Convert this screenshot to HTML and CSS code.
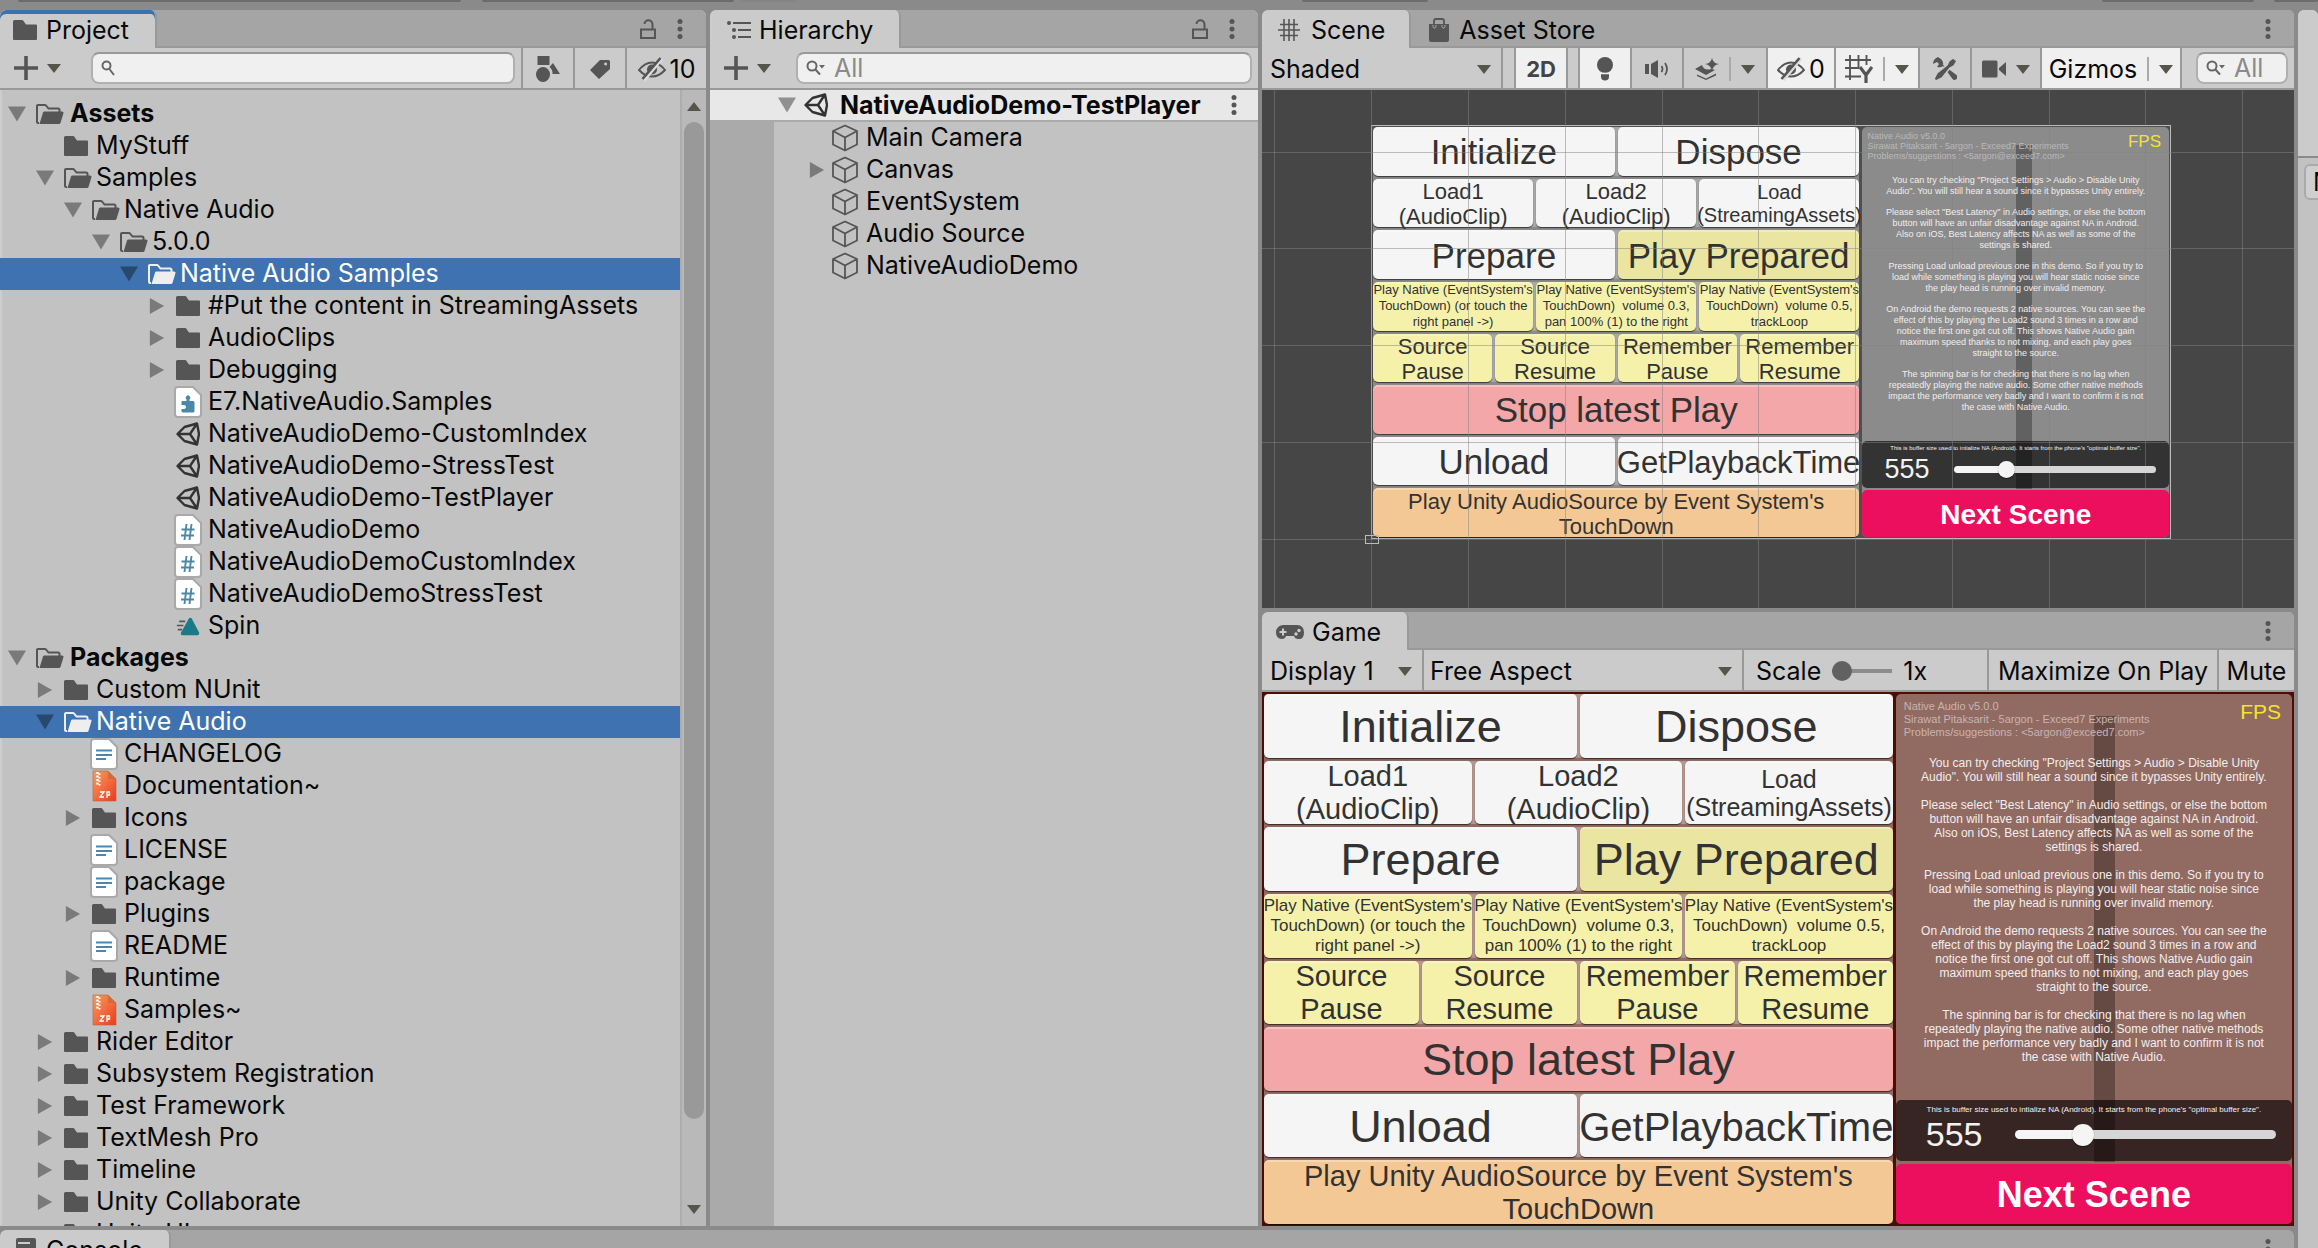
FILE: index.html
```html
<!DOCTYPE html>
<html lang="en">
<head>
<meta charset="utf-8">
<title>Unity Editor - NativeAudioDemo-TestPlayer</title>
<link rel="stylesheet" href="styles.css">
</head>
<body>
<svg class="defs" aria-hidden="true">
  <symbol id="down" viewBox="0 0 18 15"><path d="M0 0h18L9 15z"/></symbol>
  <symbol id="right" viewBox="0 0 16 18"><path d="M0 0l16 9-16 9z"/></symbol>
  <symbol id="tri" viewBox="0 0 14 9"><path d="M0 0h14L7 9z"/></symbol>
  <symbol id="folder" viewBox="0 0 24 20"><path d="M0 1.5Q0 0 1.500 0H9q1 0 1.500 1L13 4.500h10q1 0 1 1V19q0 1-1 1H1q-1 0-1-1z"/></symbol>
  <symbol id="open" viewBox="0 0 28 20"><path d="M3 19H2q-1 0-1-1V2q0-1 1-1h7q1 0 1.500 1L12.500 4.500H22q1.500 0 1.500 1.500v2.500" fill="none" stroke="currentColor" stroke-width="2"/><path d="M8.500 7.500H26q2 0 1.500 1.500l-3 10q-.3 1-1.500 1H3.500L7 8.500q.3-1 1.500-1z"/></symbol>
  <symbol id="unity" viewBox="0 0 24 24"><path d="M1.500 12L8.500 5 21 1.500l2 10.500-2 10.500L8.500 19zM1.500 12H14M14 12l7-10.500M14 12l7 10.500" fill="none" stroke="currentColor" stroke-width="2.400" stroke-linejoin="round"/></symbol>
  <symbol id="cube" viewBox="0 0 28 28"><path d="M14 1.500L26 7v13.500L14 26.500 2 20.500V7zM2 7l12 6.500L26 7M14 13.500v13" fill="none" stroke="currentColor" stroke-width="1.800" stroke-linejoin="round"/></symbol>
  <symbol id="doc" viewBox="0 0 28 32"><path d="M4 1h15l8 8v19q0 3-3 3H4q-3 0-3-3V4q0-3 3-3z" fill="#fff" stroke="#a9a9a9" stroke-width="2"/></symbol>
  <symbol id="script" viewBox="0 0 28 32"><use href="#doc"/><path d="M12.500 10l-2 16M17.500 10l-2 16M7.500 15.500h13M7 21.500h13" stroke="#4a87a8" stroke-width="1.900" fill="none"/></symbol>
  <symbol id="text" viewBox="0 0 28 32"><use href="#doc"/><path d="M6 12.500h16M6 17h16M6 21h10" stroke="#4a87a8" stroke-width="2.200" fill="none"/></symbol>
  <symbol id="asm" viewBox="0 0 28 32"><use href="#doc"/><path d="M8 15h4.500v-1.500a2.300 2.300 0 1 1 3 0V15H19q1.500 0 1.500 1.500V25q0 1.500-1.500 1.500H9q-1.500 0-1.500-1.500v-2h2.500a2 2 0 0 0 0-4H7.500v-3z" fill="#4a87a8"/></symbol>
  <symbol id="zip" viewBox="0 0 28 32"><defs><linearGradient id="zg" x1="0" y1="0" x2="1" y2="1"><stop offset="0" stop-color="#f6a060"/><stop offset="1" stop-color="#ee3a1e"/></linearGradient></defs><path d="M3 1h15l8 8v22H3z" fill="url(#zg)" stroke="#c06038" stroke-width=".6"/><path d="M18 1v8h8z" fill="#d8693f"/><path d="M7.500 2v14" stroke="#fff" stroke-width="2.500" stroke-dasharray="2 1.500"/><path d="M9.500 3.500v12" stroke="#fff" stroke-width="2" stroke-dasharray="1.500 2"/><path d="M10 22h4l-4 5h4M17 28v-6h2.500v3H17" fill="none" stroke="#fff" stroke-width="1.300"/></symbol>
  <symbol id="anim" viewBox="0 0 26 20"><path d="M3.500 5H10M1 9.500h7M2 14h4.500" stroke="#555" stroke-width="1.800"/><path d="M14 2q1.500-2 3 0l8 15q.5 3-2 3H7q-2.500-.5-1.500-3z" fill="#1a7a86"/></symbol>
  <symbol id="lock" viewBox="0 0 18 20"><path d="M2 10.500h14v8.500H2zM13.500 10V5.500A4 4 0 0 0 5.500 5" fill="none" stroke="currentColor" stroke-width="2"/></symbol>
  <symbol id="kebab" viewBox="0 0 6 20"><circle cx="3" cy="2.500" r="2.500"/><circle cx="3" cy="10" r="2.500"/><circle cx="3" cy="17.500" r="2.500"/></symbol>
  <symbol id="plus" viewBox="0 0 24 24"><path d="M10.200 0h3.600v10.200H24v3.600H13.800V24h-3.600V13.800H0v-3.600h10.200z"/></symbol>
  <symbol id="mag" viewBox="0 0 20 16"><path d="M8 8.500L13 15" stroke="currentColor" stroke-width="2"/><circle cx="5.500" cy="5.500" r="4" fill="none" stroke="currentColor" stroke-width="2"/></symbol>
  <symbol id="magd" viewBox="0 0 20 16"><path d="M9 9l5 5.500" stroke="currentColor" stroke-width="2"/><circle cx="6" cy="6" r="4.500" fill="none" stroke="currentColor" stroke-width="2"/><path d="M13 5h6l-3 3.500z"/></symbol>
  <symbol id="shapes" viewBox="0 0 24 26"><path d="M1.500 0h12v9h-12zM17 7l7 11h-7.500a8 8 0 0 0-3-7z"/><ellipse cx="7" cy="18.500" rx="7" ry="7.500"/></symbol>
  <symbol id="tag" viewBox="0 0 20 20"><path d="M10 1h8.500q1.500 0 1.500 1.500V10L9 20 0 11zM15.500 3.500a1.500 1.500 0 1 0 .1 3 1.500 1.500 0 0 0-.1-3z" fill-rule="evenodd"/></symbol>
  <symbol id="eye" viewBox="0 0 28 24"><path d="M1 13Q7 5.500 14 5.500T27 13q-6 6.500-13 6.500T1 13z" fill="none" stroke="currentColor" stroke-width="2"/><circle cx="14" cy="12.500" r="5"/><path d="M6.500 23.500L24 2" stroke="#ddd" stroke-width="2.600"/><path d="M4.500 22L22.500 1" stroke="currentColor" stroke-width="2.600"/></symbol>
  <symbol id="list" viewBox="0 0 24 18"><path d="M6 2h18M11 9h13M11 16h13" stroke="currentColor" stroke-width="2"/><circle cx="2" cy="2" r="2"/><circle cx="7" cy="9" r="2"/><circle cx="7" cy="16" r="2"/></symbol>
  <symbol id="hash" viewBox="0 0 22 22"><path d="M6 0v22M11 0v22M16 0v22M2 5.500h18M0 11h22M2 16.500h18" stroke="currentColor" stroke-width="1.600" fill="none"/></symbol>
  <symbol id="bag" viewBox="0 0 20 24"><path d="M0 6h20v16q0 2-2 2H2q-2 0-2-2z"/><path d="M5 9V3q0-2 2-2h6q2 0 2 2v6" fill="none" stroke="currentColor" stroke-width="1.800"/><path d="M4 7v1.500a1.500 1.500 0 0 0 3 0V7M13 7v1.500a1.500 1.500 0 0 0 3 0V7" stroke="#aaa" fill="none"/></symbol>
  <symbol id="bulb" viewBox="0 0 16 24"><circle cx="8" cy="8" r="8"/><path d="M4 17h8v2.500q0 4-4 4t-4-4z"/><path d="M3 16.500h10" stroke="#f0f0f0" stroke-width="1.500"/></symbol>
  <symbol id="audio" viewBox="0 0 24 18"><path d="M0 4h4v10H0zM6 4l7-4v18l-7-4z"/><path d="M16.500 6q2 3 0 6M20 3q4 6 0 12" fill="none" stroke="currentColor" stroke-width="1.800"/></symbol>
  <symbol id="fx" viewBox="0 0 24 22"><path d="M0 11l7-4q2 6 9 4l4 1-9 5zM2 16.500l9 4 10-5v2L11 22 2 18z"/><path d="M17 0q1 5.500 7 6-6 1-7 7-1-6-7-7 6-.5 7-6z"/></symbol>
  <symbol id="gridy" viewBox="0 0 28 28"><path d="M5 0v25M13.500 0v14M21.500 0v10M0 5h26M0 13h14M0 21.500h16" stroke="currentColor" stroke-width="1.900" fill="none"/><path d="M15 12l6 8 6-8M21 19v9" fill="none" stroke="currentColor" stroke-width="3.200"/></symbol>
  <symbol id="tools" viewBox="0 0 24 24"><path d="M5 0Q0 2 0 7l4-2 2 2-2 3q4 1 6-1l9.500 13q2 2 4 0t0-4L10 8q1-5-5-8z"/><path d="M20 1l4 3-3 5-4 2-8 10-6 3-2-2 3-6 10-8 2-4z" stroke="#cbcbcb" stroke-width="1.500"/></symbol>
  <symbol id="cam" viewBox="0 0 24 18"><path d="M0 2q0-1.500 1.500-1.500H14q1.500 0 1.500 1.500v14q0 1.500-1.500 1.500H1.500Q0 17.500 0 16zM17 8l7-6v14l-7-6z"/></symbol>
  <symbol id="pad" viewBox="0 0 28 16"><path d="M7 1h14q7 0 7 7.500T22 15q-3 0-4-3h-8q-1 3-4 3-6 0-6-6.500T7 1z"/><path d="M3.500 8h7M7 4.500v7" stroke="#cbcbcb" stroke-width="2"/><circle cx="20" cy="10" r="1.700" fill="#cbcbcb"/><circle cx="23" cy="6.500" r="1.700" fill="#cbcbcb"/></symbol>
  <symbol id="console" viewBox="0 0 20 24"><path d="M2 0h16q2 0 2 2v22H0V2q0-2 2-2z"/><path d="M2 5h12M2 11h16M2 17h16" stroke="#cbcbcb" stroke-width="2"/></symbol>
</svg>

<div class="editor">
  <header class="mainbar"><i></i><i></i><i class="faint"></i><i></i><i></i><i></i></header>

  <section class="panel project">
    <div class="tabs">
      <button class="tab focused"><svg width="24" height="20"><use href="#folder"/></svg>Project</button>
      <div class="tab-tools"><button aria-label="Lock"><svg width="18" height="20"><use href="#lock"/></svg></button><button aria-label="Menu"><svg width="6" height="20"><use href="#kebab"/></svg></button></div>
    </div>
    <div class="toolbar">
      <button class="add" aria-label="Create"><svg width="24" height="24"><use href="#plus"/></svg><svg width="14" height="9"><use href="#tri"/></svg></button>
      <label class="search"><svg width="20" height="16"><use href="#mag"/></svg><input type="text" aria-label="Search project"></label>
      <button class="cell w52" aria-label="Search by type"><svg width="24" height="26"><use href="#shapes"/></svg></button>
      <button class="cell w52" aria-label="Search by label"><svg width="20" height="20"><use href="#tag"/></svg></button>
      <button class="cell w81"><svg width="28" height="24"><use href="#eye"/></svg>10</button>
    </div>
    <div class="tree-area">
      <ul class="tree">
        <li class="l0 root"><svg class="arrow"><use href="#down"/></svg><svg class="icon"><use href="#open"/></svg>Assets</li>
        <li class="l1"><span class="arrow"></span><svg class="icon fold"><use href="#folder"/></svg>MyStuff</li>
        <li class="l1"><svg class="arrow"><use href="#down"/></svg><svg class="icon"><use href="#open"/></svg>Samples</li>
        <li class="l2"><svg class="arrow"><use href="#down"/></svg><svg class="icon"><use href="#open"/></svg>Native Audio</li>
        <li class="l3"><svg class="arrow"><use href="#down"/></svg><svg class="icon"><use href="#open"/></svg>5.0.0</li>
        <li class="l4 selected"><svg class="arrow"><use href="#down"/></svg><svg class="icon"><use href="#open"/></svg>Native Audio Samples</li>
        <li class="l5"><svg class="arrow"><use href="#right"/></svg><svg class="icon fold"><use href="#folder"/></svg>#Put the content in StreamingAssets</li>
        <li class="l5"><svg class="arrow"><use href="#right"/></svg><svg class="icon fold"><use href="#folder"/></svg>AudioClips</li>
        <li class="l5"><svg class="arrow"><use href="#right"/></svg><svg class="icon fold"><use href="#folder"/></svg>Debugging</li>
        <li class="l5"><span class="arrow"></span><svg class="icon file"><use href="#asm"/></svg>E7.NativeAudio.Samples</li>
        <li class="l5"><span class="arrow"></span><svg class="icon logo"><use href="#unity"/></svg>NativeAudioDemo-CustomIndex</li>
        <li class="l5"><span class="arrow"></span><svg class="icon logo"><use href="#unity"/></svg>NativeAudioDemo-StressTest</li>
        <li class="l5"><span class="arrow"></span><svg class="icon logo"><use href="#unity"/></svg>NativeAudioDemo-TestPlayer</li>
        <li class="l5"><span class="arrow"></span><svg class="icon file"><use href="#script"/></svg>NativeAudioDemo</li>
        <li class="l5"><span class="arrow"></span><svg class="icon file"><use href="#script"/></svg>NativeAudioDemoCustomIndex</li>
        <li class="l5"><span class="arrow"></span><svg class="icon file"><use href="#script"/></svg>NativeAudioDemoStressTest</li>
        <li class="l5"><span class="arrow"></span><svg class="icon fold"><use href="#anim"/></svg>Spin</li>
        <li class="l0 root"><svg class="arrow"><use href="#down"/></svg><svg class="icon"><use href="#open"/></svg>Packages</li>
        <li class="l1"><svg class="arrow"><use href="#right"/></svg><svg class="icon fold"><use href="#folder"/></svg>Custom NUnit</li>
        <li class="l1 selected"><svg class="arrow"><use href="#down"/></svg><svg class="icon"><use href="#open"/></svg>Native Audio</li>
        <li class="l2"><span class="arrow"></span><svg class="icon file"><use href="#text"/></svg>CHANGELOG</li>
        <li class="l2"><span class="arrow"></span><svg class="icon file"><use href="#zip"/></svg>Documentation~</li>
        <li class="l2"><svg class="arrow"><use href="#right"/></svg><svg class="icon fold"><use href="#folder"/></svg>Icons</li>
        <li class="l2"><span class="arrow"></span><svg class="icon file"><use href="#text"/></svg>LICENSE</li>
        <li class="l2"><span class="arrow"></span><svg class="icon file"><use href="#text"/></svg>package</li>
        <li class="l2"><svg class="arrow"><use href="#right"/></svg><svg class="icon fold"><use href="#folder"/></svg>Plugins</li>
        <li class="l2"><span class="arrow"></span><svg class="icon file"><use href="#text"/></svg>README</li>
        <li class="l2"><svg class="arrow"><use href="#right"/></svg><svg class="icon fold"><use href="#folder"/></svg>Runtime</li>
        <li class="l2"><span class="arrow"></span><svg class="icon file"><use href="#zip"/></svg>Samples~</li>
        <li class="l1"><svg class="arrow"><use href="#right"/></svg><svg class="icon fold"><use href="#folder"/></svg>Rider Editor</li>
        <li class="l1"><svg class="arrow"><use href="#right"/></svg><svg class="icon fold"><use href="#folder"/></svg>Subsystem Registration</li>
        <li class="l1"><svg class="arrow"><use href="#right"/></svg><svg class="icon fold"><use href="#folder"/></svg>Test Framework</li>
        <li class="l1"><svg class="arrow"><use href="#right"/></svg><svg class="icon fold"><use href="#folder"/></svg>TextMesh Pro</li>
        <li class="l1"><svg class="arrow"><use href="#right"/></svg><svg class="icon fold"><use href="#folder"/></svg>Timeline</li>
        <li class="l1"><svg class="arrow"><use href="#right"/></svg><svg class="icon fold"><use href="#folder"/></svg>Unity Collaborate</li>
        <li class="l1"><svg class="arrow"><use href="#right"/></svg><svg class="icon fold"><use href="#folder"/></svg>Unity UI</li>
      </ul>
      <div class="scrollbar"><svg class="up" width="14" height="9"><use href="#tri"/></svg><div class="thumb"></div><svg width="14" height="9"><use href="#tri"/></svg></div>
    </div>
  </section>

  <section class="panel hierarchy">
    <div class="tabs">
      <button class="tab"><svg width="24" height="18"><use href="#list"/></svg>Hierarchy</button>
      <div class="tab-tools"><button aria-label="Lock"><svg width="18" height="20"><use href="#lock"/></svg></button><button aria-label="Menu"><svg width="6" height="20"><use href="#kebab"/></svg></button></div>
    </div>
    <div class="toolbar">
      <button class="add" aria-label="Create"><svg width="24" height="24"><use href="#plus"/></svg><svg width="14" height="9"><use href="#tri"/></svg></button>
      <label class="search"><svg width="20" height="16"><use href="#magd"/></svg><input type="text" placeholder="All" aria-label="Search hierarchy"></label>
    </div>
    <div class="scene-row"><svg class="arrow"><use href="#down"/></svg><svg class="icon logo"><use href="#unity"/></svg><span>NativeAudioDemo-TestPlayer</span><button aria-label="Scene menu"><svg width="6" height="20"><use href="#kebab"/></svg></button></div>
    <div class="objects">
      <ul class="tree">
        <li><span class="arrow"></span><svg class="icon cube"><use href="#cube"/></svg>Main Camera</li>
        <li><svg class="arrow"><use href="#right"/></svg><svg class="icon cube"><use href="#cube"/></svg>Canvas</li>
        <li><span class="arrow"></span><svg class="icon cube"><use href="#cube"/></svg>EventSystem</li>
        <li><span class="arrow"></span><svg class="icon cube"><use href="#cube"/></svg>Audio Source</li>
        <li><span class="arrow"></span><svg class="icon cube"><use href="#cube"/></svg>NativeAudioDemo</li>
      </ul>
    </div>
  </section>

  <div class="views">
    <section class="panel scene">
      <div class="tabs">
        <button class="tab"><svg width="22" height="22"><use href="#hash"/></svg>Scene</button>
        <button class="tab idle"><svg width="20" height="24"><use href="#bag"/></svg>Asset Store</button>
        <div class="tab-tools"><button aria-label="Menu"><svg width="6" height="20"><use href="#kebab"/></svg></button></div>
      </div>
      <div class="toolbar">
        <div class="drop shaded"><select aria-label="Draw mode"><option>Shaded</option></select><svg width="14" height="9"><use href="#tri"/></svg></div>
        <button class="cell on bold w52">2D</button>
        <span class="spacer"></span>
        <button class="cell on w52" aria-label="Lighting"><svg width="16" height="24"><use href="#bulb"/></svg></button>
        <button class="cell w52" aria-label="Audio"><svg width="24" height="18"><use href="#audio"/></svg></button>
        <button class="cell w84" aria-label="Effects"><svg width="24" height="22"><use href="#fx"/></svg><i class="bar"></i><svg width="14" height="9"><use href="#tri"/></svg></button>
        <button class="cell on w68"><svg width="28" height="24"><use href="#eye"/></svg>0</button>
        <button class="cell on w84" aria-label="Grid"><svg width="28" height="28"><use href="#gridy"/></svg><i class="bar"></i><svg width="14" height="9"><use href="#tri"/></svg></button>
        <button class="cell w52" aria-label="Tools"><svg width="24" height="24"><use href="#tools"/></svg></button>
        <button class="cell w70" aria-label="Camera"><svg width="24" height="18"><use href="#cam"/></svg><svg width="14" height="9"><use href="#tri"/></svg></button>
        <button class="cell on gizmos">Gizmos<i class="bar"></i><svg width="14" height="9"><use href="#tri"/></svg></button>
        <label class="search short"><svg width="20" height="16"><use href="#magd"/></svg><input type="text" placeholder="All" aria-label="Search scene"></label>
      </div>
      <div class="scene-view">
        <div class="demo small">
          <div class="pads">
            <div class="c2"><button>Initialize</button><button>Dispose</button></div>
            <div class="c3"><button class="m">Load1<br>(AudioClip)</button><button class="m">Load2<br>(AudioClip)</button><button class="s">Load<br>(StreamingAssets)</button></div>
            <div class="c2"><button>Prepare</button><button class="olive">Play Prepared</button></div>
            <div class="c3 xs yellow"><button>Play Native (EventSystem's<br>TouchDown) (or touch the<br>right panel -&gt;)</button><button>Play Native (EventSystem's<br>TouchDown)&nbsp; volume 0.3,<br>pan 100% (1) to the right</button><button>Play Native (EventSystem's<br>TouchDown)&nbsp; volume 0.5,<br>trackLoop</button></div>
            <div class="c4 m yellow"><button>Source<br>Pause</button><button>Source<br>Resume</button><button>Remember<br>Pause</button><button>Remember<br>Resume</button></div>
            <div class="c1"><button class="red">Stop latest Play</button></div>
            <div class="c2"><button>Unload</button><button class="l">GetPlaybackTime</button></div>
            <div class="c1"><button class="m orange">Play Unity AudioSource by Event System's<br>TouchDown</button></div>
          </div>
          <div class="side">
            <div class="spinner"></div>
            <div class="info">
              <div class="credits"><p>Native Audio v5.0.0<br>Sirawat Pitaksarit - 5argon - Exceed7 Experiments<br>Problems/suggestions : &lt;5argon@exceed7.com&gt;</p><span class="fps">FPS</span></div>
              <p>You can try checking "Project Settings &gt; Audio &gt; Disable Unity<br>Audio". You will still hear a sound since it bypasses Unity entirely.</p>
              <p>Please select "Best Latency" in Audio settings, or else the bottom<br>button will have an unfair disadvantage against NA in Android.<br>Also on iOS, Best Latency affects NA as well as some of the<br>settings is shared.</p>
              <p>Pressing Load unload previous one in this demo. So if you try to<br>load while something is playing you will hear static noise since<br>the play head is running over invalid memory.</p>
              <p>On Android the demo requests 2 native sources. You can see the<br>effect of this by playing the Load2 sound 3 times in a row and<br>notice the first one got cut off. This shows Native Audio gain<br>maximum speed thanks to not mixing, and each play goes<br>straight to the source.</p>
              <p>The spinning bar is for checking that there is no lag when<br>repeatedly playing the native audio. Some other native methods<br>impact the performance very badly and I want to confirm it is not<br>the case with Native Audio.</p>
            </div>
            <div class="buffer">
              <label for="buf-a">This is buffer size used to intialize NA (Android). It starts from the phone's "optimal buffer size".</label>
              <div class="slide"><output>555</output><input id="buf-a" type="range" min="0" max="100" value="24"></div>
            </div>
            <button class="next">Next Scene</button>
          </div>
        </div>
        <svg class="gridlines" aria-hidden="true"><path d="M12.500 0v518M109.500 0v518M206.500 0v518M303.500 0v518M400.500 0v518M496.500 0v518M593.500 0v518M690.500 0v518M787.500 0v518M883.500 0v518M980.500 0v518M0 62.500h1032M0 158.500h1032M0 255.500h1032M0 352.500h1032M0 449.500h1032" stroke="#828282" stroke-opacity=".5"/><rect x="103.500" y="445.500" width="13" height="8" fill="none" stroke="#bbb"/></svg>
      </div>
    </section>

    <section class="panel game">
      <div class="tabs">
        <button class="tab"><svg width="28" height="16"><use href="#pad"/></svg>Game</button>
        <div class="tab-tools"><button aria-label="Menu"><svg width="6" height="20"><use href="#kebab"/></svg></button></div>
      </div>
      <div class="toolbar">
        <div class="drop display"><select aria-label="Display"><option>Display 1</option></select><svg width="14" height="9"><use href="#tri"/></svg></div>
        <div class="drop aspect"><select aria-label="Aspect"><option>Free Aspect</option></select><svg width="14" height="9"><use href="#tri"/></svg></div>
        <div class="scale"><label for="scale">Scale</label><input id="scale" type="range" min="1" max="5" value="1"><output>1x</output></div>
        <button class="cell w230">Maximize On Play</button>
        <button class="cell w77">Mute</button>
      </div>
      <div class="demo">
          <div class="pads">
            <div class="c2"><button>Initialize</button><button>Dispose</button></div>
            <div class="c3"><button class="m">Load1<br>(AudioClip)</button><button class="m">Load2<br>(AudioClip)</button><button class="s">Load<br>(StreamingAssets)</button></div>
            <div class="c2"><button>Prepare</button><button class="olive">Play Prepared</button></div>
            <div class="c3 xs yellow"><button>Play Native (EventSystem's<br>TouchDown) (or touch the<br>right panel -&gt;)</button><button>Play Native (EventSystem's<br>TouchDown)&nbsp; volume 0.3,<br>pan 100% (1) to the right</button><button>Play Native (EventSystem's<br>TouchDown)&nbsp; volume 0.5,<br>trackLoop</button></div>
            <div class="c4 m yellow"><button>Source<br>Pause</button><button>Source<br>Resume</button><button>Remember<br>Pause</button><button>Remember<br>Resume</button></div>
            <div class="c1"><button class="red">Stop latest Play</button></div>
            <div class="c2"><button>Unload</button><button class="l">GetPlaybackTime</button></div>
            <div class="c1"><button class="m orange">Play Unity AudioSource by Event System's<br>TouchDown</button></div>
          </div>
          <div class="side">
            <div class="spinner"></div>
            <div class="info">
              <div class="credits"><p>Native Audio v5.0.0<br>Sirawat Pitaksarit - 5argon - Exceed7 Experiments<br>Problems/suggestions : &lt;5argon@exceed7.com&gt;</p><span class="fps">FPS</span></div>
              <p>You can try checking "Project Settings &gt; Audio &gt; Disable Unity<br>Audio". You will still hear a sound since it bypasses Unity entirely.</p>
              <p>Please select "Best Latency" in Audio settings, or else the bottom<br>button will have an unfair disadvantage against NA in Android.<br>Also on iOS, Best Latency affects NA as well as some of the<br>settings is shared.</p>
              <p>Pressing Load unload previous one in this demo. So if you try to<br>load while something is playing you will hear static noise since<br>the play head is running over invalid memory.</p>
              <p>On Android the demo requests 2 native sources. You can see the<br>effect of this by playing the Load2 sound 3 times in a row and<br>notice the first one got cut off. This shows Native Audio gain<br>maximum speed thanks to not mixing, and each play goes<br>straight to the source.</p>
              <p>The spinning bar is for checking that there is no lag when<br>repeatedly playing the native audio. Some other native methods<br>impact the performance very badly and I want to confirm it is not<br>the case with Native Audio.</p>
            </div>
            <div class="buffer">
              <label for="buf-b">This is buffer size used to intialize NA (Android). It starts from the phone's "optimal buffer size".</label>
              <div class="slide"><output>555</output><input id="buf-b" type="range" min="0" max="100" value="24"></div>
            </div>
            <button class="next">Next Scene</button>
          </div>
      </div>
    </section>
  </div>

  <aside class="panel inspector"><div class="insp-head"></div><div class="insp-body"><button>M</button></div></aside>

  <section class="panel console">
    <div class="tabs">
      <button class="tab"><svg width="20" height="24"><use href="#console"/></svg>Console</button>
      <div class="tab-tools"><button aria-label="Menu"><svg width="6" height="20"><use href="#kebab"/></svg></button></div>
    </div>
  </section>
</div>
</body>
</html>
```
FILE: styles.css
```css
* { box-sizing: border-box; }
body { margin: 0; background: #8a8a8a; color: #090909; font: 25px/32px Inter, "Noto Sans", sans-serif; }
.defs { position: absolute; width: 0; height: 0; }
svg { fill: currentColor; color: #555; display: block; flex: none; }
button { font: inherit; color: inherit; border: 0; background: none; padding: 0; margin: 0; }
ul { list-style: none; margin: 0; padding: 0; }
p { margin: 0; }

.editor { display: grid; height: 100vh; overflow: hidden;
  grid-template-columns: 706fr 548fr 1032fr 20fr;
  grid-template-rows: 10px minmax(0, 1fr) 18px; column-gap: 4px; }
.project, .hierarchy, .views { margin-bottom: 4px; }
.mainbar { grid-column: 1 / -1; display: grid; height: 2px;
  grid-template-columns: 18fr 443fr 21fr 252fr 6fr 57fr 505fr 126fr 674fr 152fr 20fr 44fr; }
.mainbar i { background: #6c6c6c; border-radius: 0 0 4px 4px; }
.mainbar i:nth-child(1) { grid-column: 2; }
.mainbar i:nth-child(2) { grid-column: 4; }
.mainbar i:nth-child(3) { grid-column: 6; }
.mainbar i:nth-child(4) { grid-column: 8; }
.mainbar i:nth-child(5) { grid-column: 10; }
.mainbar i:nth-child(6) { grid-column: 12; }
.mainbar .faint { background: #858585; }

.panel { display: flex; flex-direction: column; min-width: 0; min-height: 0; overflow: hidden; border-radius: 6px 6px 0 0; background: #c2c2c2; }
.views { display: flex; flex-direction: column; gap: 4px; min-width: 0; min-height: 0; }
.scene { flex: 598 1 0; }
.game { flex: 614 1 0; }

.tabs { display: flex; flex: none; height: 38px; background: #a5a5a5; box-shadow: inset 0 -2px #999; }
.tab { display: flex; align-items: center; gap: 8px; height: 38px; padding: 2px 26px 0 14px; background: #cbcbcb; border-radius: 6px 6px 0 0; border-right: 2px solid #999; }
.tab.focused { box-shadow: inset 0 4px #3a72b0; padding: 2px 26px 0 13px; gap: 9px; }
.tab.idle { background: none; border: 0; }
.hierarchy .tab { padding: 2px 26px 0 17px; gap: 8px; }
.scene .tab { padding: 2px 24px 0 16px; gap: 11px; }
.scene .tab.idle { padding-left: 18px; gap: 10px; }
.tab-tools { display: flex; align-items: center; gap: 20px; margin-left: auto; padding-right: 23px; }
.console .tab { padding: 2px 26px 0 16px; gap: 10px; }

.toolbar { display: flex; flex: none; height: 42px; background: #cbcbcb; border-bottom: 2px solid #999; align-items: center; }
.toolbar svg[height="9"], .scrollbar svg { color: #55554c; }
.add { display: flex; align-items: center; gap: 9px; padding: 0 30px 0 14px; }
.hierarchy .add { padding-right: 25px; }
.search { display: flex; align-items: center; flex: 1; min-width: 0; height: 32px; margin-right: 6px; padding-left: 8px; background: #f0f0f0; border: 2px solid #b0b0b0; border-top-color: #999; border-radius: 8px; }
.search input { flex: 1; min-width: 0; width: 10px; margin-left: 8px; padding: 0; border: 0; background: none; font: inherit; line-height: 28px; height: 28px; }
.search input::placeholder { color: #8a8a8a; opacity: 1; }
.search svg { color: #666; }
.search.short { flex: 0 0 92px; margin-left: 14px; }
.cell { display: flex; flex: none; align-items: center; justify-content: center; height: 40px; padding-top: 2px; border-left: 2px solid #999; gap: 10px; white-space: nowrap; }
.cell.on { background: #f0f0f0; }
.cell.bold { font-weight: 700; font-size: 22px; color: #444; }
.w52 { width: 52px; } .w68 { width: 68px; } .w70 { width: 70px; } .w77 { width: 77px; }
.w81 { width: 81px; } .w84 { width: 84px; } .w230 { width: 230px; }
.gizmos { width: 142px; border-right: 2px solid #999; }
.w81, .w68 { gap: 4px; }
.bar { width: 2px; height: 24px; background: #aaa; }
.spacer { align-self: stretch; width: 12px; border-left: 2px solid #999; }
.drop { display: flex; align-items: center; height: 40px; padding: 2px 10px 0 0; border-right: 2px solid #999; }
.drop select { flex: 1; min-width: 0; appearance: none; border: 0; background: none; font: inherit; color: inherit; padding: 0 0 0 8px; height: 38px; }
.shaded { flex: 1; margin-right: 11px; }
.display { width: 162px; }
.aspect { flex: 1; }
.aspect select { padding-left: 6px; }
.scale { display: flex; align-items: center; gap: 11px; width: 243px; padding: 2px 0 0 12px; }
.scale input { appearance: none; width: 60px; height: 20px; margin: 0; background: linear-gradient(#8c8c8c, #8c8c8c) center / 100% 4px no-repeat; }
.scale input::-webkit-slider-thumb { appearance: none; width: 20px; height: 20px; border-radius: 50%; background: #616161; }

.tree-area { display: flex; flex: 1; min-height: 0; }
.project .tree { flex: 1; padding-top: 8px; box-shadow: inset 2px 0 #cdcdcd; overflow: hidden; }
.tree li { display: flex; align-items: flex-start; height: 32px; line-height: 30px; white-space: nowrap; }
.arrow { flex: none; align-self: center; width: 18px; height: 16px; margin-right: 10px; color: #7a7a7a; }
.icon { align-self: center; width: 28px; height: 20px; margin-right: 4px; }
.icon.fold { width: 24px; margin-right: 8px; }
.icon.file { width: 28px; height: 32px; margin: 0 6px 0 -2px; }
.icon.logo { width: 24px; height: 24px; margin-right: 8px; color: #333; }
.icon.cube { width: 28px; height: 28px; margin-right: 7px; }
.l0 { padding-left: 8px; } .l1 { padding-left: 36px; } .l2 { padding-left: 64px; }
.l3 { padding-left: 92px; } .l4 { padding-left: 120px; } .l5 { padding-left: 148px; }
.root { font-weight: 700; }
.root .icon { margin-right: 6px; }
.selected { background: #3e72b0; color: #fff; }
.selected .icon { color: #eee; }
.selected .arrow { color: #27496e; }
.scrollbar { display: flex; flex-direction: column; align-items: center; width: 26px; padding: 12px 0; background: #b9b9b9; border-left: 2px solid #adadad; }
.scrollbar .thumb { width: 20px; flex: 1; margin: 11px 0 86px; border-radius: 10px; background: #999; }
.scrollbar .up { transform: rotate(180deg); }

.scene-row { display: flex; align-items: center; height: 32px; padding: 0 21px 0 68px; background: #e8e8e8; border-bottom: 2px solid #aaa; font-weight: 700; }
.scene-row .arrow { margin-right: 8px; color: #909090; }
.scene-row .logo { margin-right: 12px; }
.scene-row span { flex: 1; }
.objects { flex: 1; padding-left: 64px; background: #aaa; display: flex; }
.objects .tree { flex: 1; padding-left: 34px; background: #c2c2c2; }
.objects .arrow { margin-right: 5px; }

.scene-view { position: relative; flex: 1; min-height: 0; display: flex; padding: 35px 123px 69px 109px; background: #464646; }
.gridlines { position: absolute; inset: 0; width: 100%; height: 100%; pointer-events: none; }

.demo { flex: 1; min-width: 0; min-height: 0; display: grid; gap: 3px; padding: 2px; background: #500c02;
  grid-template-columns: minmax(0, 630fr) minmax(0, 397fr); grid-template-rows: minmax(0, 1fr);
  font: 45px/50px "Liberation Sans", Arial, sans-serif; color: #323232;
  --panel: #916a62; --gap: #b39790; --m: 29px/33px; --s: 25px/28px; --xs: 17px/20px; --l: 40px/44px; --foot: #372523;
  --face: "Liberation Sans", Arial, sans-serif; }
.demo.small { background: #505050; border: 1px solid #bbb; padding: 1px; font-size: 35px; line-height: 40px;
  --panel: #8b8b8b; --gap: #a8a8a8; --m: 22px/25px; --s: 20px/23px; --xs: 13px/16px; --l: 31px/35px; --foot: #333; }
.pads { display: grid; grid-template-rows: repeat(8, minmax(0, 1fr)); gap: 3px; background: var(--panel); border-radius: 4px; }
.pads > div { display: grid; gap: 3px; grid-template-rows: minmax(0, 1fr); grid-auto-flow: column; grid-auto-columns: minmax(0, 1fr); background: linear-gradient(var(--gap), var(--gap)) center / calc(100% - 8px) 100% no-repeat; }
.pads button { display: flex; align-items: center; justify-content: center; padding-top: 2px; white-space: nowrap; text-align: center; background: #f5f5f5; border-radius: 5px; box-shadow: inset 0 2px rgba(255, 255, 255, .3), 0 1px 1px rgba(0, 0, 0, .6); }
.pads .m, .pads .m button { font: var(--m) var(--face); }
.pads .s { font: var(--s) var(--face); }
.pads .l { font: var(--l) var(--face); }
.pads .xs button { font: var(--xs) var(--face); padding-top: 0; }
.pads .yellow button { background: #f5f1aa; }
.pads .olive { background: #eae6a1; }
.pads .red { background: #f3a7a9; }
.pads .orange { background: #f4c895; }
.side { position: relative; display: flex; flex-direction: column; background: var(--panel); border-radius: 5px; }
.spinner { position: absolute; left: 50%; top: 22px; bottom: 62px; width: 21px; background: rgba(0, 0, 0, .3); z-index: 1; }
.info { position: relative; z-index: 2; flex: 1; min-height: 0; padding: 6px 8px 0; color: #f2eeee; text-align: center; font-size: 12px; line-height: 14px; white-space: nowrap; }
.info > p { margin-bottom: 14px; }
.info .credits { display: flex; justify-content: space-between; text-align: left; font-size: 11px; line-height: 13px; color: #c8b4b0; margin-bottom: 17px; }
.fps { font-size: 21px; line-height: 24px; color: #f2e52a; padding: 0 3px; }
.buffer { display: flex; flex-direction: column; align-items: center; height: 61px; padding-top: 5px; background: var(--foot); border-radius: 5px; color: #f2f2f2; font-size: 8px; line-height: 10px; white-space: nowrap; }
.buffer label { position: relative; z-index: 2; }
.slide { display: flex; align-items: center; align-self: stretch; gap: 32px; padding: 0 16px 0 30px; font-size: 34px; line-height: 38px; position: relative; z-index: 2; }
.slide input { appearance: none; flex: 1; min-width: 0; height: 22px; margin: 0; background: none; }
.slide input::-webkit-slider-runnable-track { height: 9px; border-radius: 5px; background: linear-gradient(90deg, #f5f5f5 25%, #d6d6d6 25%); }
.slide input::-webkit-slider-thumb { appearance: none; width: 22px; height: 22px; margin-top: -6px; border-radius: 50%; background: #f5f5f5; box-shadow: 0 1px 1px rgba(0, 0, 0, .5); }
.next { height: 60px; margin-top: 3px; padding-top: 2px; background: #eb0f5e; border-radius: 5px; color: #fff; font: 700 36px/42px "Liberation Sans", Arial, sans-serif; position: relative; z-index: 2; }

.small .spinner { width: 16px; top: 18px; bottom: 48px; }
.small .info { padding: 4px 5px 0; font-size: 9px; line-height: 11px; }
.small .info > p { margin-bottom: 10px; }
.small .info .credits { font-size: 9px; line-height: 10px; color: #b9b9b9; margin-bottom: 14px; }
.small .fps { font-size: 17px; line-height: 22px; }
.small .buffer { height: 47px; padding-top: 3px; font-size: 6px; line-height: 8px; }
.small .slide { gap: 24px; padding: 2px 13px 0 22px; font-size: 27px; line-height: 30px; }
.small .slide input { height: 18px; }
.small .slide input::-webkit-slider-runnable-track { height: 7px; }
.small .slide input::-webkit-slider-thumb { width: 17px; height: 17px; margin-top: -5px; }
.small .next { height: 47px; margin-top: 2px; font-size: 28px; line-height: 32px; }

.inspector { grid-row: 2 / 4; grid-column: 4; }
.insp-head { height: 148px; background: #cbcbcb; border-bottom: 2px solid #8a8a8a; }
.insp-body { padding: 6px 0 0 6px; overflow: hidden; }
.insp-body button { width: 60px; height: 36px; padding-left: 7px; text-align: left; border: 2px solid #aaa; border-radius: 6px; background: #cfcfcf; line-height: 32px; }
.console { grid-row: 3; grid-column: 1 / 4; }
```
